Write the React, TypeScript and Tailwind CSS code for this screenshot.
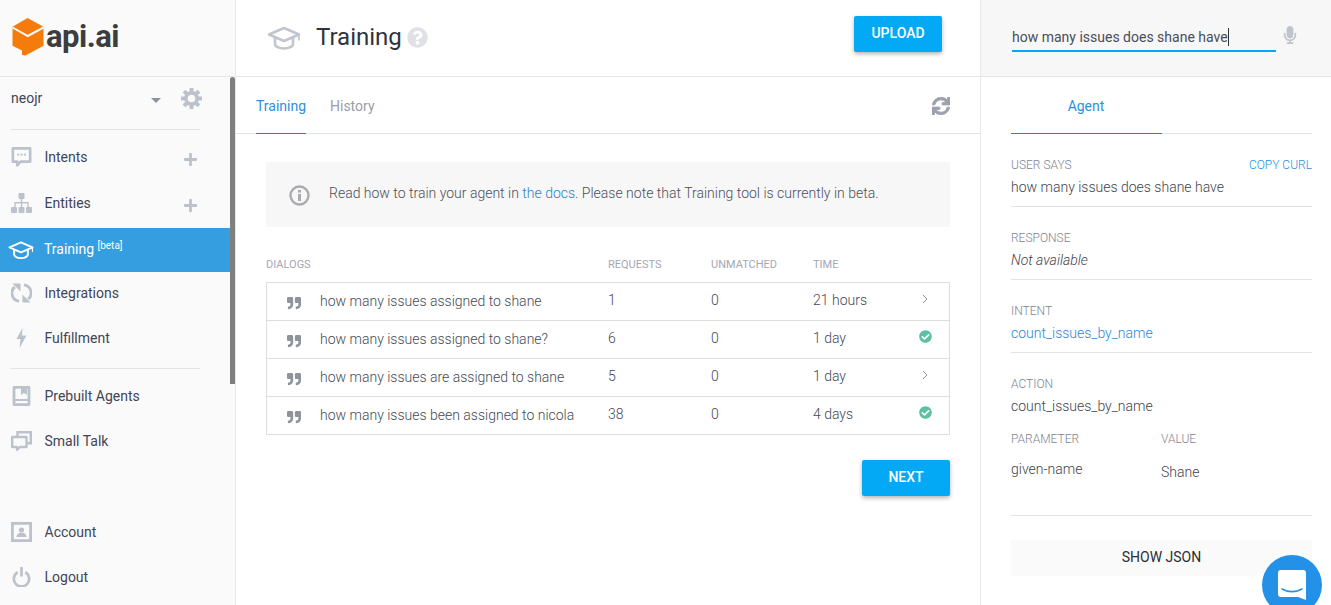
import React from "react";
import {
  FaCheckCircle,
  FaMicrophone,
  FaPlus,
  FaQuestionCircle,
  FaQuoteRight,
  FaSync,
} from "react-icons/fa";

type IconProps = { className?: string };

const CapIcon = ({ className }: IconProps) => (
  <svg viewBox="0 0 34 24" fill="none" stroke="currentColor" strokeWidth="2.6" className={className}>
    <path d="M2 8.5 17 2l15 6.5L17 15z" strokeLinejoin="round" />
    <path d="M8 12v6c0 2.500 4 4.500 9 4.500s9-2 9-4.500v-6" />
    <path d="M32 8.500v6" strokeWidth="1.600" />
  </svg>
);

const GearIcon = ({ className }: IconProps) => (
  <svg viewBox="0 0 21 21" className={className}>
    <circle cx="10.500" cy="10.500" r="5.600" fill="none" stroke="currentColor" strokeWidth="3.600" />
    {[0, 45, 90, 135, 180, 225, 270, 315].map((deg) => (
      <rect key={deg} x="8.500" y="0" width="4" height="4.500" fill="currentColor" transform={`rotate(${deg} 10.500 10.500)`} />
    ))}
  </svg>
);

const ChatIcon = ({ className }: IconProps) => (
  <svg viewBox="0 0 21 21" fill="none" className={className}>
    <path d="M1.400 1.400h18.200v14H9.500l-3.500 3.800v-3.800H1.400z" stroke="currentColor" strokeWidth="2.800" strokeLinejoin="round" />
    <rect x="6" y="7" width="2" height="2" fill="currentColor" />
    <rect x="9.500" y="7" width="2" height="2" fill="currentColor" />
    <rect x="13" y="7" width="2" height="2" fill="currentColor" />
  </svg>
);

const SitemapIcon = ({ className }: IconProps) => (
  <svg viewBox="0 0 21 20" fill="currentColor" className={className}>
    <rect x="7.500" y="0" width="6" height="6" rx="1" />
    <rect x="0" y="14" width="6" height="6" rx="1" />
    <rect x="7.500" y="14" width="6" height="6" rx="1" />
    <rect x="15" y="14" width="6" height="6" rx="1" />
    <path d="M9.800 5h1.400v4h6.500v6h-1.400v-4.600h-5.100V15H9.800v-4.600H4.700V15H3.300V9h6.500z" />
  </svg>
);

const LoopIcon = ({ className }: IconProps) => (
  <svg viewBox="0 0 21 21" fill="none" className={className}>
    <path d="M8 19A8.500 8.500 0 0 1 3.500 4" stroke="currentColor" strokeWidth="3" />
    <path d="M13 2A8.500 8.500 0 0 1 17.500 17" stroke="currentColor" strokeWidth="3" />
    <path d="M1 .5h8.500V9z" fill="currentColor" />
    <path d="M20 20.500h-8.500V12z" fill="currentColor" />
  </svg>
);

const BoltIcon = ({ className }: IconProps) => (
  <svg viewBox="0 0 11 20" fill="currentColor" className={className}>
    <path d="M6.500 0 .500 11h4L3.500 20l7-12.500H6z" />
  </svg>
);

const BookIcon = ({ className }: IconProps) => (
  <svg viewBox="0 0 19 20" fill="none" className={className}>
    <path d="M2 1.400h15v17.200H2z" stroke="currentColor" strokeWidth="2.800" strokeLinejoin="round" />
    <path d="M2 14h15" stroke="currentColor" strokeWidth="2" />
    <path d="M9 1h6v8l-3-2-3 2z" fill="currentColor" />
  </svg>
);

const TalkIcon = ({ className }: IconProps) => (
  <svg viewBox="0 0 21 20" fill="none" stroke="currentColor" strokeWidth="2.400" className={className}>
    <path d="M6.500 5V1.200h13.300v11h-4" />
    <path d="M1.200 6h14.300v10H9l-3 3v-3H1.200z" strokeLinejoin="round" />
  </svg>
);

const AccountIcon = ({ className }: IconProps) => (
  <svg viewBox="0 0 21 20" className={className}>
    <path d="M1.400 1.400h18.200v17.200H1.400z" fill="none" stroke="currentColor" strokeWidth="2.800" />
    <circle cx="10.500" cy="8" r="2.600" fill="currentColor" />
    <path d="M5.500 15c0-3 2-4.300 5-4.300s5 1.300 5 4.300z" fill="currentColor" />
  </svg>
);

const PowerIcon = ({ className }: IconProps) => (
  <svg viewBox="0 0 19 21" fill="none" stroke="currentColor" strokeWidth="2.800" className={className}>
    <path d="M5.500 5.500a8 8 0 1 0 8 0" />
    <path d="M9.500 0v10" />
  </svg>
);

const InfoIcon = ({ className }: IconProps) => (
  <svg viewBox="0 0 21 21" className={className}>
    <circle cx="10.500" cy="10.500" r="9" fill="none" stroke="currentColor" strokeWidth="2.400" />
    <rect x="9" y="9" width="3" height="7" fill="currentColor" />
    <rect x="9" y="5" width="3" height="2.600" fill="currentColor" />
  </svg>
);

const Logo = () => (
  <svg viewBox="0 0 32 38" className="h-[38px] w-[32px]">
    <path d="M15.500 0 31.500 8.800v19L13.500 37.500 10 37v-4.500L.500 27.800V8.800z" fill="#f57c0c" />
    <path d="M.500 9.500 15.800 18 31.500 9.500" fill="none" stroke="#fafafa" strokeWidth="2" />
  </svg>
);

type NavItem = { label: string; Icon: React.FC<IconProps>; plus?: boolean };

const NavRow = ({ label, Icon, plus }: NavItem) => (
  <div className="flex h-[45px] items-center pl-[11px] text-[#3f4557]">
    <span className="flex w-[21px] justify-center text-[#bcc2cc]">
      <Icon className="h-[20px] w-[21px]" />
    </span>
    <span className="ml-[12.5px] flex-1">{label}</span>
    {plus && <FaPlus className="mr-[37px] mt-[5px] h-[15px] w-[15px] text-[#bcc2cc]" />}
  </div>
);

const Sidebar = () => (
  <aside className="relative flex h-full w-[236px] shrink-0 flex-col border-r border-[#e8e8e8] bg-[#fafafa]">
    <div className="flex h-[77px] items-center border-b border-[#e6e6e6] pb-[2px] pl-[12px]">
      <Logo />
      <span className="ml-[2px] text-[31px] font-bold tracking-[-0.5px] text-[#3d3d3d]">api.ai</span>
    </div>
    <div className="mx-[11px] flex h-[53px] w-[189px] items-start border-b border-[#e3e3e3] pt-[11px] text-[#3f4557]">
      <span className="flex-1">neojr</span>
      <span className="mr-[20px] mt-[10px] h-0 w-0 border-x-[5px] border-t-[5px] border-x-transparent border-t-[#8e93a1]" />
      <GearIcon className="-mr-[2px] h-[21px] w-[21px] text-[#bcc2cc]" />
    </div>
    <div className="pt-[4px]">
      <NavRow label="Intents" Icon={ChatIcon} plus />
      <div className="mt-px">
        <NavRow label="Entities" Icon={SitemapIcon} plus />
      </div>
      <div className="mr-[5px] mt-[3px] flex h-[44px] items-center bg-[#349ee0] pl-[8px] text-white">
        <CapIcon className="h-[20px] w-[26px]" />
        <span className="ml-[10px] -mt-[3px]">
          Training <sup className="text-[10px]">[beta]</sup>
        </span>
      </div>
      <div className="-mt-[2px]">
        <NavRow label="Integrations" Icon={LoopIcon} />
      </div>
      <NavRow label="Fulfillment" Icon={BoltIcon} />
    </div>
    <div className="mx-[11px] mb-[4px] mt-[8px] w-[189px] border-b border-[#e3e3e3]" />
    <NavRow label="Prebuilt Agents" Icon={BookIcon} />
    <NavRow label="Small Talk" Icon={TalkIcon} />
    <div className="mt-auto pb-[6px]">
      <NavRow label="Account" Icon={AccountIcon} />
      <NavRow label="Logout" Icon={PowerIcon} />
    </div>
    {/* scrollbar thumb sits over the sidebar */}
    <div className="absolute right-0 top-[77px] h-[307px] w-[5px] rounded-t-sm bg-[#7f7f7f]" />
  </aside>
);

const dialogs = [
  { text: "how many issues assigned to shane", requests: "1", time: "21 hours", done: false },
  { text: "how many issues assigned to shane?", requests: "6", time: "1 day", done: true },
  { text: "how many issues are assigned to shane", requests: "5", time: "1 day", done: false },
  { text: "how many issues been assigned to nicola", requests: "38", time: "4 days", done: true },
];

const BlueButton = ({ label }: { label: string }) => (
  <button className="h-[36px] w-[88px] rounded-[2px] bg-[#03a9f4] pb-[2px] text-sm font-medium text-white shadow-[0_2px_4px_rgba(0,0,0,0.3)]">
    {label}
  </button>
);

const Training = () => (
  <main className="flex h-full w-[744px] shrink-0 flex-col bg-white">
    <div className="flex h-[77px] items-center border-b border-[#e6e6e6] pl-[31px] pr-[38px]">
      <CapIcon className="h-[24px] w-[34px] text-[#c1c5cd]" />
      <h1 className="ml-[15px] -mt-[2px] text-2xl text-[#2f3340]">Training</h1>
      <FaQuestionCircle className="ml-[5px] -mt-px h-[21px] w-[21px] text-[#dfe1e6]" />
      <div className="ml-auto -mt-[9px]">
        <BlueButton label="UPLOAD" />
      </div>
    </div>

    <div className="flex h-[57px] items-stretch border-b border-[#e3e3e3] pl-[20px] pr-[29px]">
      <div className="-mb-px flex w-[50px] items-center justify-center border-b border-[#1c84d4] pt-px text-[#2c8fe0]">Training</div>
      <div className="ml-[24px] flex items-center pt-[2px] text-[#989dab]">History</div>
      <FaSync stroke="currentColor" strokeWidth="24" className="ml-auto mt-[20px] h-[18px] w-[18px] -translate-x-px text-[#9ca1ad]" />
    </div>

    <div className="pl-[30px] pr-[30px] pt-[28px]">
      <div className="flex h-[65px] items-center bg-[#f7f7f7] pl-[23px] text-[#4b4f5b]">
        <InfoIcon className="mt-[1px] h-[21px] w-[21px] text-[#a9abb1]" />
        <p className="ml-[19px] -mt-[3px] font-light">
          Read how to train your agent in <span className="text-[#2f7fc9]">the docs</span>. Please note that Training tool is currently in beta.
        </p>
      </div>

      <div className="mt-[30px] grid h-[25px] grid-cols-[342px_103px_102px_1fr] text-[11px] text-[#a3a7b2]">
        <span>DIALOGS</span>
        <span>REQUESTS</span>
        <span>UNMATCHED</span>
        <span>TIME</span>
      </div>

      <div className="border border-b-0 border-[#dedede]">
        {dialogs.map((row) => (
          <div
            key={row.text}
            className="grid h-[38px] grid-cols-[53px_288px_103px_102px_90px_1fr] items-center border-b border-[#dedede] font-light text-[#454954]"
          >
            <FaQuoteRight className="ml-[20px] mt-[3px] h-[14px] w-[14px] text-[#8f939b]" />
            <span className="-mt-[2px] whitespace-nowrap">{row.text}</span>
            <span className="-mt-[4px]">{row.requests}</span>
            <span className="-mt-[4px]">0</span>
            <span className="-mt-[4px]">{row.time}</span>
            <span className="-mt-[6px] flex justify-center pr-[2px]">
              {row.done ? (
                <FaCheckCircle className="h-[13px] w-[13px] text-[#5cc1a4]" />
              ) : (
                <svg viewBox="0 0 6 10" fill="none" stroke="#8e929c" strokeWidth="1" className="h-[10px] w-[6px]">
                  <path d="m1 1 4 4-4 4" />
                </svg>
              )}
            </span>
          </div>
        ))}
      </div>

      <div className="mt-[25px] flex justify-end">
        <BlueButton label="NEXT" />
      </div>
    </div>
  </main>
);

const Label = ({ children }: { children: React.ReactNode }) => (
  <div className="text-xs font-light leading-[18px] text-[#7f8391]">{children}</div>
);

const Section = ({ label, children }: { label: string; children: React.ReactNode }) => (
  <div className="h-[73px] border-b border-[#e3e3e3] pt-[22px]">
    <Label>{label}</Label>
    <div className="mt-[3px] font-light leading-[20px]">{children}</div>
  </div>
);

const RightPanel = () => (
  <section className="relative flex h-full min-w-0 flex-1 flex-col border-l border-[#e8e8e8] bg-white text-[#3f424c]">
    <div className="flex h-[77px] items-start border-b border-[#e6e6e6] bg-[#f7f7f7] pl-[31px]">
      <div className="mt-[27px] flex h-[25px] w-[264px] items-start border-b-2 border-[#03a9f4] leading-[20px] text-[#4a4d57]">
        how many issues does shane have
        <span className="mt-[1px] h-[18px] w-px bg-[#333]" />
      </div>
      <FaMicrophone className="ml-[7px] mt-[26px] h-[18px] w-[14px] text-[#c0c4cc]" />
    </div>

    <div className="pl-[30px] pr-[19px]">
      <div className="flex h-[57px] border-b border-[#e3e3e3]">
        <div className="-mb-px flex w-[151px] items-center justify-center border-b border-[#1c84d4] pr-px pt-px text-[#2c8fe0]">Agent</div>
      </div>

      <div className="h-[73px] border-b border-[#e3e3e3] pt-[22px]">
        <div className="flex justify-between">
          <Label>USER SAYS</Label>
          <span className="text-xs font-light leading-[18px] text-[#2c8fe0]">COPY CURL</span>
        </div>
        <div className="mt-[3px] font-light leading-[20px]">how many issues does shane have</div>
      </div>
      <Section label="RESPONSE">
        <em>Not available</em>
      </Section>
      <Section label="INTENT">
        <span className="text-[#2f86d8]">count_issues_by_name</span>
      </Section>

      <div className="pt-[22px]">
        <Label>ACTION</Label>
        <div className="mt-[3px] font-light leading-[20px]">count_issues_by_name</div>
      </div>
      <div className="mt-[14px] grid h-[86px] grid-cols-[150px_1fr] border-b border-[#e3e3e3] font-light">
        <div>
          <Label>PARAMETER</Label>
          <div className="mt-[11px] leading-[20px]">given-name</div>
        </div>
        <div>
          <Label>VALUE</Label>
          <div className="mt-[14px] leading-[20px]">Shane</div>
        </div>
      </div>

      <button className="mt-[24px] h-[36px] w-full bg-[#fafafa] pb-[2px] text-sm text-[#2b2d33]">SHOW JSON</button>
    </div>

    {/* chat launcher floats over the panel */}
    <div className="absolute left-[281px] top-[555px] h-[60px] w-[60px] rounded-full bg-[#2491e8]">
      <svg viewBox="0 0 28 30" className="absolute left-[16px] top-[15px] h-[30px] w-[28px]">
        <path d="M3 0h22a3 3 0 0 1 3 3v27l-8-3H3a3 3 0 0 1-3-3V3a3 3 0 0 1 3-3z" fill="#fff" />
        <path d="M4 19c6 3.500 14 3.500 20 0" fill="none" stroke="#2491e8" strokeWidth="1.600" strokeLinecap="round" />
      </svg>
    </div>
  </section>
);

export default function App() {
  return (
    <div className="flex h-[605px] w-[1331px] overflow-hidden bg-white font-['Roboto',sans-serif] text-sm">
      <Sidebar />
      <Training />
      <RightPanel />
    </div>
  );
}
